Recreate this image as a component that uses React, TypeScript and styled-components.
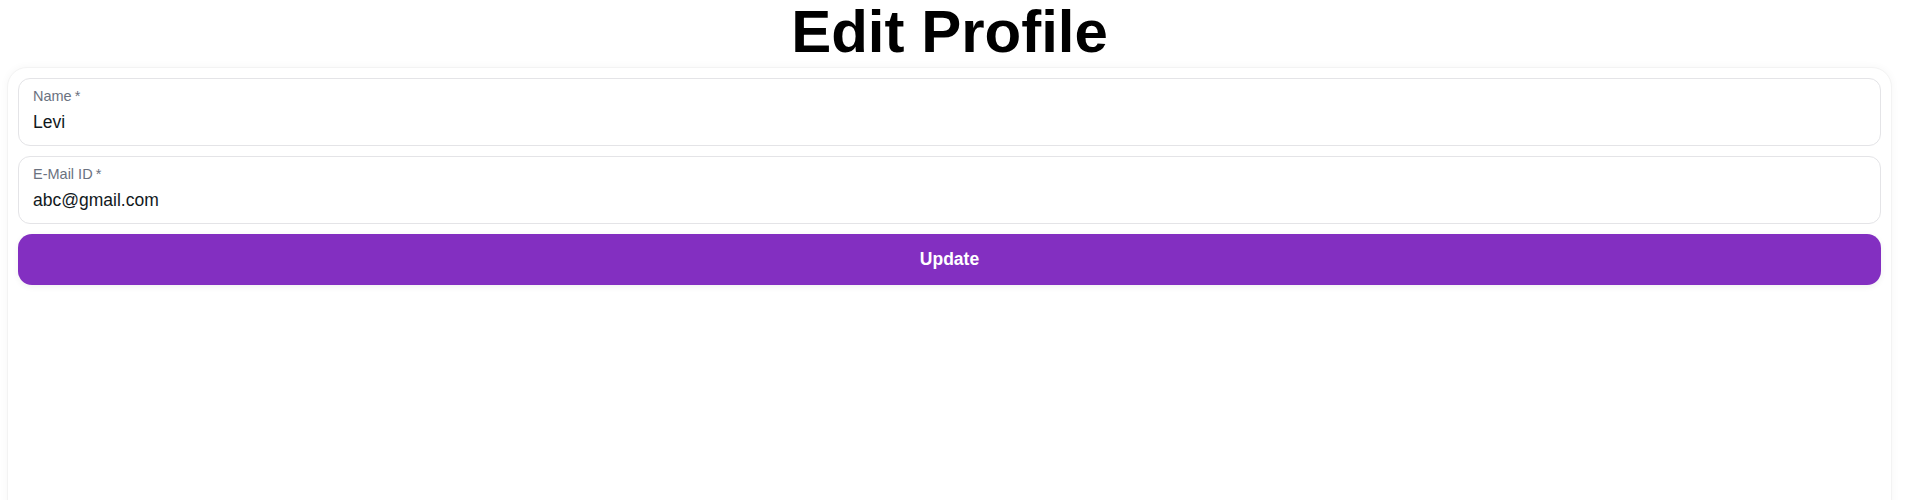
import React, { useState } from 'react';
import styled, { createGlobalStyle } from 'styled-components';

const GlobalStyle = createGlobalStyle`
  body {
    margin: 0;
    background: #ffffff;
    font-family: 'Liberation Sans', Arial, sans-serif;
  }
`;

const EditProfile = () => {
  const [name, setName] = useState('Levi');
  const [email, setEmail] = useState('abc@gmail.com');

  return (
    <Page>
      <GlobalStyle />
      <Title>Edit Profile</Title>
      <Card>
        <Field>
          <Label>
            Name<Required>*</Required>
          </Label>
          <Input value={name} onChange={(e) => setName(e.target.value)} />
        </Field>
        <Field>
          <Label>
            E-Mail ID<Required>*</Required>
          </Label>
          <Input value={email} onChange={(e) => setEmail(e.target.value)} />
        </Field>
        <UpdateButton type="button">Update</UpdateButton>
      </Card>
    </Page>
  );
};

const Page = styled.div`
  display: flex;
  flex-direction: column;
  margin: 0 16px 0 7px;
`;

const Title = styled.h1`
  margin: 0;
  height: 67px;
  text-align: center;
  font-size: 60px;
  line-height: 64px;
  font-weight: bold;
  color: #000;
`;

const Card = styled.div`
  display: flex;
  flex-direction: column;
  gap: 10px;
  padding: 10px;
  min-height: 600px;
  background: #fff;
  border: 1px solid #f3f3f3;
  border-radius: 20px;
  box-shadow: 0 0 8px rgba(0, 0, 0, 0.04);
`;

const Field = styled.label`
  display: flex;
  flex-direction: column;
  gap: 7px;
  height: 68px;
  box-sizing: border-box;
  padding: 9px 14px 0;
  border: 1px solid #e4e4e7;
  border-radius: 12px;
  background: #fff;
`;

const Label = styled.span`
  font-size: 14.5px;
  color: #6b7280;
  line-height: 16px;
`;

const Required = styled.span`
  margin-left: 3px;
`;

const Input = styled.input`
  border: none;
  outline: none;
  padding: 0;
  font-family: 'Liberation Sans', Arial, sans-serif;
  font-size: 17.5px;
  line-height: 22px;
  color: #11181c;
  background: transparent;
`;

const UpdateButton = styled.button`
  height: 51px;
  border: none;
  border-radius: 14px;
  background-color: #832fc1;
  color: #fff;
  font-family: 'Liberation Sans', Arial, sans-serif;
  font-size: 17.5px;
  font-weight: bold;
  cursor: pointer;
  box-shadow: 0 2px 6px rgba(0, 0, 0, 0.06);
`;

export default EditProfile;
